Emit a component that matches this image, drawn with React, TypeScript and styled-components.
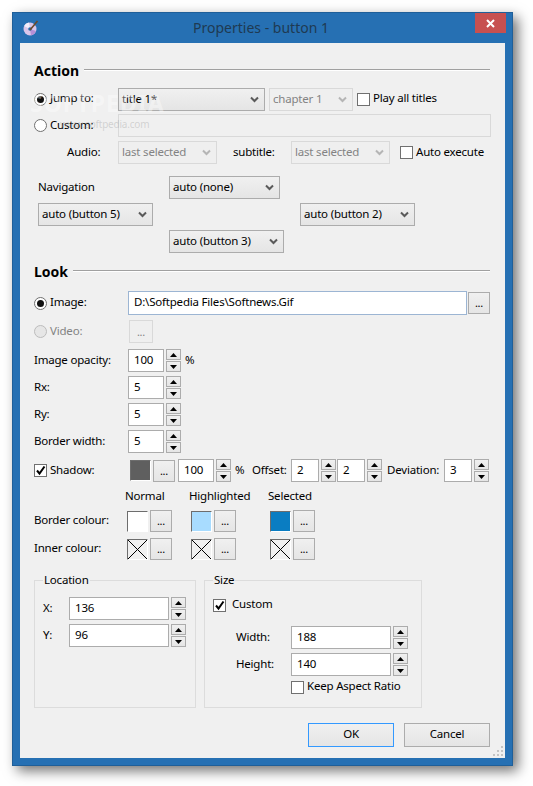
import React from 'react';
import styled, { createGlobalStyle } from 'styled-components';

const GlobalStyle = createGlobalStyle`
  html, body {
    margin: 0;
    background: #ffffff;
  }
  body {
    font-family: "Noto Sans", "Open Sans", sans-serif;
    font-size: 11.5px;
    letter-spacing: -0.2px;
    color: #000000;
  }
`;

const Page = styled.div`
  width: 533px;
  height: 786px;
  padding: 12px 0 0 12px;
  box-sizing: border-box;
  overflow: hidden;
`;

const Window = styled.div`
  position: relative;
  width: 501px;
  height: 754px;
  box-sizing: border-box;
  background: #2670b3;
  border: 1px solid #1f5f99;
  box-shadow: 5px 5px 12px rgba(0, 0, 0, 0.55);
  padding: 0 7px 7px 7px;
  display: flex;
  flex-direction: column;
`;

const TitleBar = styled.div`
  position: relative;
  height: 30px;
  flex: none;
  display: flex;
  align-items: center;
  justify-content: center;
  font-size: 14px;
  letter-spacing: 0;
  color: #1f3a52;
  padding-right: 3px;
  padding-bottom: 1px;
  box-sizing: border-box;
`;

const TitleIcon = styled.svg`
  position: absolute;
  left: 3px;
  top: 7px;
`;

const CloseButton = styled.div`
  position: absolute;
  right: -1px;
  top: 0;
  width: 31px;
  height: 20px;
  background: #c75050;
  display: flex;
  align-items: center;
  justify-content: center;
`;

const Content = styled.div`
  position: relative;
  flex: 1;
  background: #f0f0f0;
  padding: 0 15px 0 14px;
  overflow: hidden;
`;

const Heading = styled.div<{ $top: number }>`
  height: 18px;
  margin-top: ${(p) => p.$top}px;
  display: flex;
  align-items: center;
  gap: 5px;
  font-size: 14px;
  font-weight: 700;
  letter-spacing: 0;
  &::after {
    content: '';
    flex: 1;
    height: 1px;
    background: #a0a0a0;
    border-bottom: 1px solid #ffffff;
  }
`;

const Row = styled.div<{ $top: number; $h?: number }>`
  display: flex;
  align-items: center;
  height: ${(p) => p.$h ?? 23}px;
  margin-top: ${(p) => p.$top}px;
`;

const Label = styled.span<{ $w?: number; $left?: number }>`
  flex: none;
  width: ${(p) => (p.$w ? `${p.$w}px` : 'auto')};
  margin-left: ${(p) => p.$left ?? 0}px;
  padding-bottom: 3px;
  white-space: nowrap;
`;

const RadioWrap = styled.span<{ $w: number; $muted?: boolean }>`
  flex: none;
  width: ${(p) => p.$w}px;
  display: flex;
  align-items: center;
  gap: 3px;
  color: ${(p) => (p.$muted ? '#838383' : '#000000')};
`;

const RadioDot = styled.span<{ $on?: boolean; $muted?: boolean }>`
  flex: none;
  width: 13px;
  height: 13px;
  box-sizing: border-box;
  border-radius: 50%;
  border: 1px solid ${(p) => (p.$muted ? '#bcbcbc' : '#707070')};
  background: ${(p) => (p.$muted ? '#e6e6e6' : '#ffffff')};
  display: flex;
  align-items: center;
  justify-content: center;
  &::after {
    content: '';
    display: ${(p) => (p.$on ? 'block' : 'none')};
    width: 7px;
    height: 7px;
    border-radius: 50%;
    background: #111111;
  }
`;

const CheckWrap = styled.span<{ $left?: number; $w?: number; $gap?: number }>`
  flex: none;
  display: flex;
  align-items: center;
  gap: ${(p) => p.$gap ?? 3}px;
  margin-left: ${(p) => p.$left ?? 0}px;
  width: ${(p) => (p.$w ? `${p.$w}px` : 'auto')};
`;

const CheckBox = styled.span`
  flex: none;
  width: 13px;
  height: 13px;
  box-sizing: border-box;
  border: 1px solid #707070;
  background: #ffffff;
  display: flex;
  align-items: center;
  justify-content: center;
`;

const ComboBox = styled.div<{ $w: number; $off?: boolean; $left?: number }>`
  flex: none;
  width: ${(p) => p.$w}px;
  height: 23px;
  margin-left: ${(p) => p.$left ?? 0}px;
  box-sizing: border-box;
  padding: 0 5px 0 3px;
  display: flex;
  align-items: center;
  justify-content: space-between;
  border: 1px solid ${(p) => (p.$off ? '#d9d9d9' : '#acacac')};
  background: ${(p) => (p.$off ? '#efefef' : 'linear-gradient(#f0f0f0, #e5e5e5)')};
  color: ${(p) => (p.$off ? '#838383' : '#000000')};
  white-space: nowrap;
`;

const ComboText = styled.span`
  padding-bottom: 2px;
`;

const DisabledInput = styled.div`
  flex: 1;
  height: 23px;
  box-sizing: border-box;
  border: 1px solid #d9d9d9;
  background: #f0f0f0;
  margin-right: -1px;
`;

const TextBox = styled.div<{ $w?: number; $h?: number; $left?: number; $focus?: boolean }>`
  flex: ${(p) => (p.$w ? 'none' : '1')};
  width: ${(p) => (p.$w ? `${p.$w}px` : 'auto')};
  height: ${(p) => p.$h ?? 23}px;
  margin-left: ${(p) => p.$left ?? 0}px;
  box-sizing: border-box;
  border: 1px solid ${(p) => (p.$focus ? '#9cb5d3' : '#acacac')};
  background: #ffffff;
  padding: 0 5px 3px;
  display: flex;
  align-items: center;
  white-space: nowrap;
`;

const DotsButton = styled.div<{ $left?: number; $off?: boolean }>`
  flex: none;
  width: ${(p) => (p.$off ? 24 : 22)}px;
  height: ${(p) => (p.$off ? 23 : 22)}px;
  margin-left: ${(p) => p.$left ?? 0}px;
  box-sizing: border-box;
  border: 1px solid ${(p) => (p.$off ? '#d9d9d9' : '#acacac')};
  background: ${(p) => (p.$off ? '#efefef' : 'linear-gradient(#f0f0f0, #e5e5e5)')};
  color: ${(p) => (p.$off ? '#838383' : '#000000')};
  display: flex;
  align-items: center;
  justify-content: center;
  font-size: 11px;
  padding-bottom: 1px;
`;

const SpinColumn = styled.div`
  flex: none;
  width: 15px;
  margin-left: 2px;
  display: flex;
  flex-direction: column;
  gap: 1px;
`;

const SpinButton = styled.div`
  height: 11px;
  box-sizing: border-box;
  border: 1px solid #acacac;
  background: linear-gradient(#f0f0f0, #e5e5e5);
  display: flex;
  align-items: center;
  justify-content: center;
`;

const Swatch = styled.div<{ $color?: string; $left?: number }>`
  flex: none;
  width: 19px;
  height: 19px;
  margin-left: ${(p) => p.$left ?? 0}px;
  box-sizing: content-box;
  background: ${(p) => p.$color ?? 'transparent'};
  border-style: solid;
  border-width: 1px;
  border-color: #6d6d6d #ffffff #ffffff #6d6d6d;
  display: flex;
`;

const NavGrid = styled.div`
  display: grid;
  grid-template-columns: 131px 131px 115px;
  grid-auto-rows: 23px;
  row-gap: 4px;
  margin-top: 12px;
  padding-left: 4px;
  align-items: center;
`;

const ColumnTitles = styled.div`
  display: grid;
  grid-template-columns: 64px 79px auto;
  height: 18px;
  margin: 5px 0 0 91px;
  padding-bottom: 2px;
  box-sizing: border-box;
  align-items: center;
`;

const Groups = styled.div`
  display: flex;
  gap: 8px;
  margin-top: 20px;
`;

const Group = styled.div<{ $w: number }>`
  position: relative;
  width: ${(p) => p.$w}px;
  height: 128px;
  box-sizing: border-box;
  border: 1px solid #dcdcdc;
  padding: 0 8px;
`;

const GroupLegend = styled.span`
  position: absolute;
  left: 8px;
  top: -9px;
  padding: 0 1px;
  background: #f0f0f0;
`;

const Footer = styled.div`
  display: flex;
  justify-content: flex-end;
  gap: 10px;
  margin-top: 15px;
`;

const PushButton = styled.div<{ $primary?: boolean }>`
  width: 86px;
  height: 24px;
  box-sizing: border-box;
  border: 1px solid ${(p) => (p.$primary ? '#3399ff' : '#acacac')};
  background: linear-gradient(#f0f0f0, #e5e5e5);
  padding-bottom: 3px;
  display: flex;
  align-items: center;
  justify-content: center;
`;

const Grip = styled.svg`
  position: absolute;
  right: 1px;
  bottom: 1px;
`;

const WatermarkBig = styled.span`
  position: absolute;
  left: 10px;
  top: 44px;
  font-size: 23px;
  font-weight: 700;
  letter-spacing: 1px;
  color: rgba(255, 255, 255, 0.4);
  pointer-events: none;
`;

const WatermarkSmall = styled.span`
  position: absolute;
  left: 40px;
  top: 74px;
  font-size: 10px;
  color: rgba(150, 150, 150, 0.35);
  pointer-events: none;
`;

const Chevron = ({ off }: { off?: boolean }) => (
  <svg width="9" height="7" viewBox="0 0 9 7">
    <path d="M1 1.5 L4.5 5 L8 1.5" fill="none" stroke={off ? '#b5b5b5' : '#5a5a5a'} strokeWidth="2" />
  </svg>
);

const Combo = ({ text, w, off, left }: { text: string; w: number; off?: boolean; left?: number }) => (
  <ComboBox $w={w} $off={off} $left={left}>
    <ComboText>{text}</ComboText>
    <Chevron off={off} />
  </ComboBox>
);

const Triangle = ({ down }: { down?: boolean }) => (
  <svg width="7" height="4" viewBox="0 0 7 4">
    <path d={down ? 'M0 0 H7 L3.5 4 Z' : 'M0 4 H7 L3.5 0 Z'} fill="#000000" />
  </svg>
);

const Spin = () => (
  <SpinColumn>
    <SpinButton>
      <Triangle />
    </SpinButton>
    <SpinButton>
      <Triangle down />
    </SpinButton>
  </SpinColumn>
);

const Radio = ({ text, w, on, muted }: { text: string; w: number; on?: boolean; muted?: boolean }) => (
  <RadioWrap $w={w} $muted={muted}>
    <RadioDot $on={on} $muted={muted} />
    <Label>{text}</Label>
  </RadioWrap>
);

const Check = ({ text, on, left, w, gap }: { text: string; on?: boolean; left?: number; w?: number; gap?: number }) => (
  <CheckWrap $left={left} $w={w} $gap={gap}>
    <CheckBox>
      {on && (
        <svg width="11" height="11" viewBox="0 0 11 11">
          <path d="M2 5.5 L4.5 8.5 L9.5 1.5" fill="none" stroke="#000000" strokeWidth="2" />
        </svg>
      )}
    </CheckBox>
    <Label>{text}</Label>
  </CheckWrap>
);

const CrossSwatch = ({ left }: { left?: number }) => (
  <Swatch $left={left}>
    <svg width="19" height="19" viewBox="0 0 19 19">
      <path d="M0 0 L19 19 M19 0 L0 19" stroke="#000000" strokeWidth="1" />
    </svg>
  </Swatch>
);

const SpinRow = ({ label, value, suffix, top }: { label: string; value: string; suffix?: string; top: number }) => (
  <Row $top={top}>
    <Label $w={94}>{label}</Label>
    <TextBox $w={36}>{value}</TextBox>
    <Spin />
    {suffix && <Label $left={4}>{suffix}</Label>}
  </Row>
);

const App = () => (
  <>
    <GlobalStyle />
    <Page>
      <Window>
        <TitleBar>
          <TitleIcon width="16" height="16" viewBox="0 0 16 16">
            <circle cx="7" cy="9" r="6.5" fill="#d9c6ea" />
            <path d="M7 9 L1 6 A6.5 6.5 0 0 1 6 2.6 Z" fill="#f4eefa" />
            <path d="M7 9 L13 11 A6.5 6.5 0 0 1 8 15.4 Z" fill="#b58fd6" />
            <circle cx="7" cy="9" r="1.8" fill="#2670b3" />
            <path d="M7 10 L14.5 1" stroke="#6d4a2a" strokeWidth="1.6" />
          </TitleIcon>
          Properties - button 1
          <CloseButton>
            <svg width="9" height="9" viewBox="0 0 9 9">
              <path d="M1 1 L8 8 M8 1 L1 8" stroke="#ffffff" strokeWidth="2" />
            </svg>
          </CloseButton>
        </TitleBar>
        <Content>
          <Heading $top={18}>Action</Heading>
          <Row $top={9} $h={22}>
            <Radio text="Jump to:" w={84} on />
            <Combo text="title 1*" w={147} />
            <Combo text="chapter 1" w={84} off left={4} />
            <Check text="Play all titles" left={4} />
          </Row>
          <Row $top={4}>
            <Radio text="Custom:" w={84} />
            <DisabledInput />
          </Row>
          <Row $top={4}>
            <Label $w={51} $left={33}>Audio:</Label>
            <Combo text="last selected" w={99} off />
            <Label $w={58} $left={16}>subtitle:</Label>
            <Combo text="last selected" w={99} off />
            <Check text="Auto execute" left={10} />
          </Row>
          <NavGrid>
            <Label>Navigation</Label>
            <Combo text="auto (none)" w={111} />
            <span />
            <Combo text="auto (button 5)" w={115} />
            <span />
            <Combo text="auto (button 2)" w={115} />
            <span />
            <Combo text="auto (button 3)" w={115} />
          </NavGrid>
          <Heading $top={9}>Look</Heading>
          <Row $top={11} $h={24}>
            <Radio text="Image:" w={94} on />
            <TextBox $h={24} $focus>D:\Softpedia Files\Softnews.Gif</TextBox>
            <DotsButton $left={1}>...</DotsButton>
          </Row>
          <Row $top={5}>
            <Radio text="Video:" w={95} muted />
            <DotsButton $off>...</DotsButton>
          </Row>
          <SpinRow label="Image opacity:" value="100" suffix="%" top={6} />
          <SpinRow label="Rx:" value="5" top={4} />
          <SpinRow label="Ry:" value="5" top={4} />
          <SpinRow label="Border width:" value="5" top={4} />
          <Row $top={6}>
            <Check text="Shadow:" w={96} on />
            <Swatch $color="#5f5f5f" />
            <DotsButton $left={2}>...</DotsButton>
            <TextBox $w={36} $left={3}>100</TextBox>
            <Spin />
            <Label $left={4} $w={17}>%</Label>
            <Label $w={39}>Offset:</Label>
            <TextBox $w={28}>2</TextBox>
            <Spin />
            <TextBox $w={28} $left={1}>2</TextBox>
            <Spin />
            <Label $left={5} $w={57}>Deviation:</Label>
            <TextBox $w={28}>3</TextBox>
            <Spin />
          </Row>
          <ColumnTitles>
            <span>Normal</span>
            <span>Highlighted</span>
            <span>Selected</span>
          </ColumnTitles>
          <Row $top={5} $h={22}>
            <Label $w={93}>Border colour:</Label>
            <Swatch $color="#ffffff" />
            <DotsButton $left={2}>...</DotsButton>
            <Swatch $color="#a8dcff" $left={19} />
            <DotsButton $left={2}>...</DotsButton>
            <Swatch $color="#0a7dc2" $left={34} />
            <DotsButton $left={2}>...</DotsButton>
          </Row>
          <Row $top={6} $h={22}>
            <Label $w={93}>Inner colour:</Label>
            <CrossSwatch />
            <DotsButton $left={2}>...</DotsButton>
            <CrossSwatch left={19} />
            <DotsButton $left={2}>...</DotsButton>
            <CrossSwatch left={34} />
            <DotsButton $left={2}>...</DotsButton>
          </Row>
          <Groups>
            <Group $w={162}>
              <GroupLegend>Location</GroupLegend>
              <Row $top={16}>
                <Label $w={26}>X:</Label>
                <TextBox $w={100}>136</TextBox>
                <Spin />
              </Row>
              <Row $top={4}>
                <Label $w={26}>Y:</Label>
                <TextBox $w={100}>96</TextBox>
                <Spin />
              </Row>
            </Group>
            <Group $w={218}>
              <GroupLegend>Size</GroupLegend>
              <Row $top={13} $h={22}>
                <Check text="Custom" on gap={6} />
              </Row>
              <Row $top={10}>
                <Label $w={55} $left={23}>Width:</Label>
                <TextBox $w={100}>188</TextBox>
                <Spin />
              </Row>
              <Row $top={4}>
                <Label $w={55} $left={23}>Height:</Label>
                <TextBox $w={100}>140</TextBox>
                <Spin />
              </Row>
              <Row $top={2} $h={18}>
                <Check text="Keep Aspect Ratio" left={78} />
              </Row>
            </Group>
          </Groups>
          <Footer>
            <PushButton $primary>OK</PushButton>
            <PushButton>Cancel</PushButton>
          </Footer>
          <WatermarkBig>SOFTPEDIA</WatermarkBig>
          <WatermarkSmall>www.softpedia.com</WatermarkSmall>
          <Grip width="11" height="11" viewBox="0 0 11 11">
            <path d="M8 0h2v2H8z M4 4h2v2H4z M8 4h2v2H8z M0 8h2v2H0z M4 8h2v2H4z M8 8h2v2H8z" fill="#c4c4c4" />
          </Grip>
        </Content>
      </Window>
    </Page>
  </>
);

export default App;
